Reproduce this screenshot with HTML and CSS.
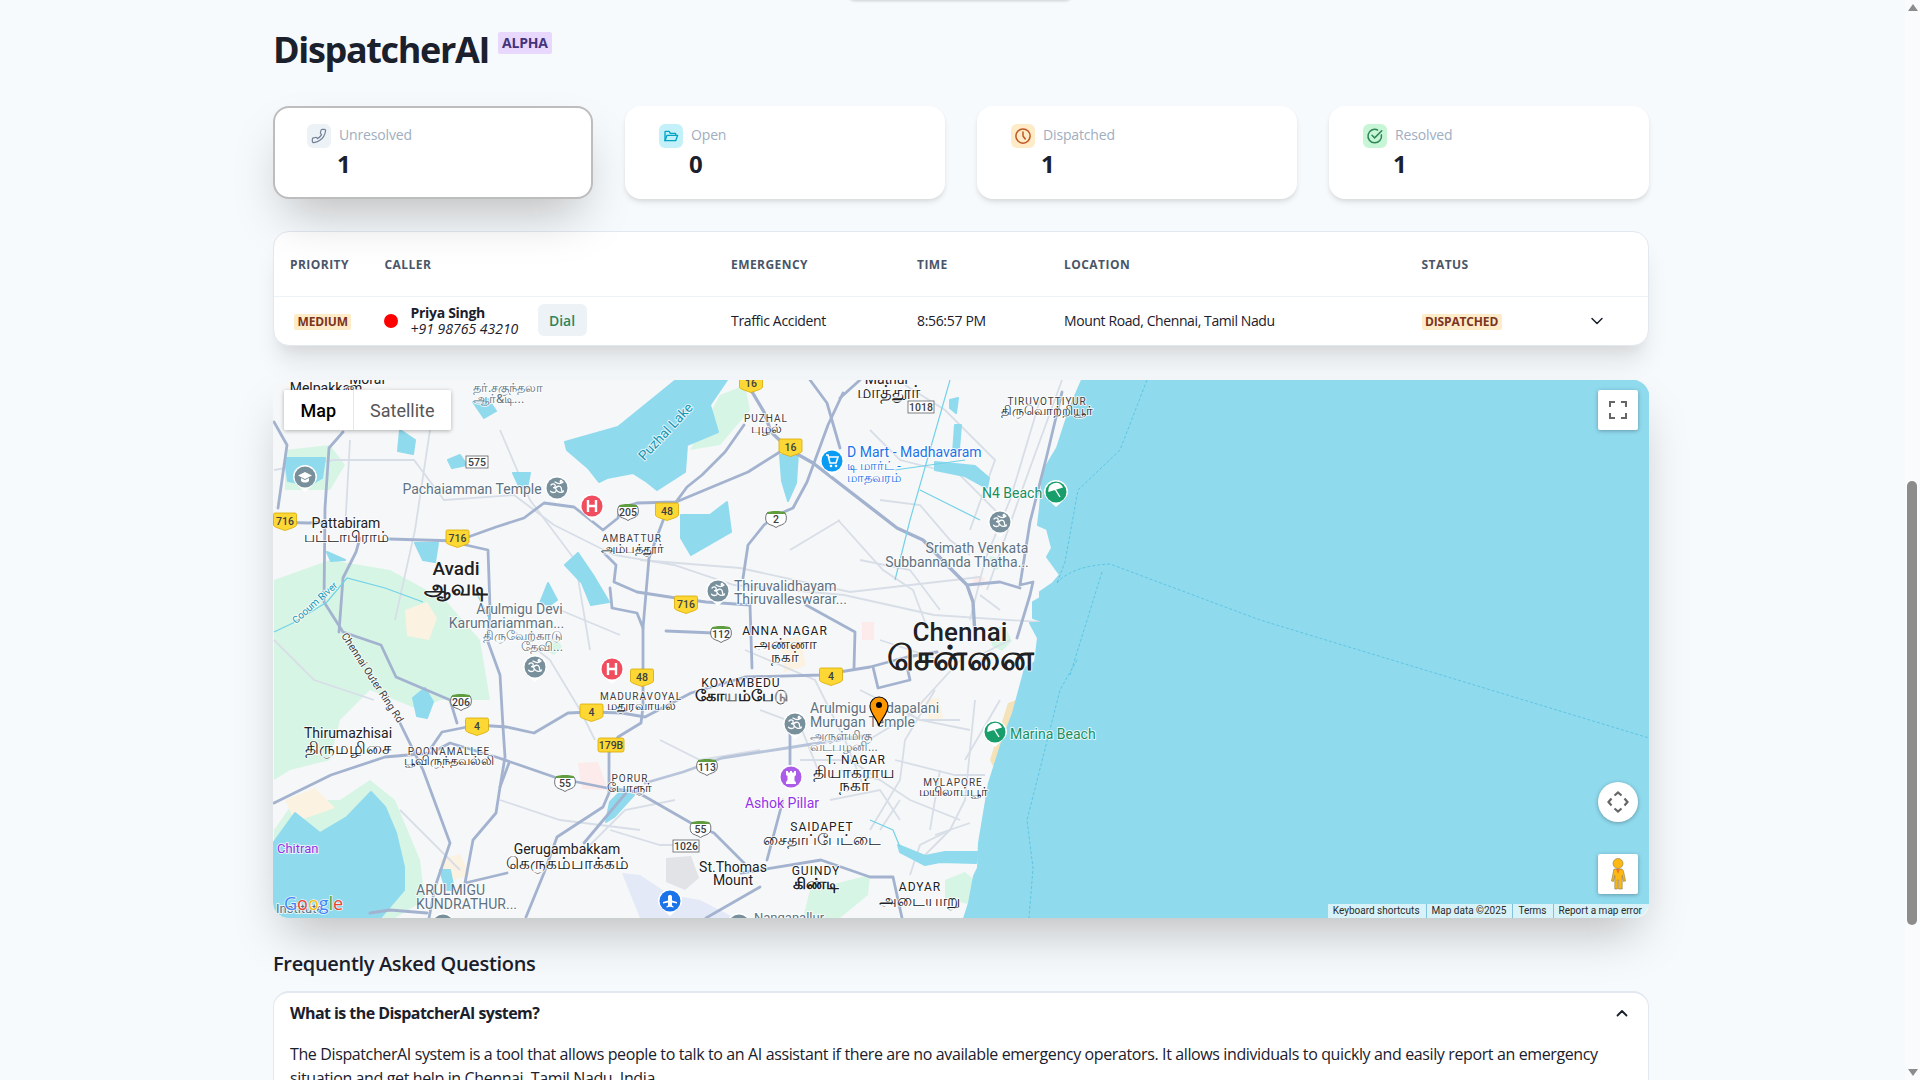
FILE: index.html
```html
<!DOCTYPE html>
<html lang="en">
<head>
<meta charset="utf-8">
<title>DispatcherAI</title>
<link rel="stylesheet" href="styles.css">
</head>
<body>
<div class="top-tab"></div>
<main class="page">
  <header class="title-row">
    <h1>DispatcherAI</h1>
    <span class="alpha">ALPHA</span>
  </header>

  <section class="stats">
    <div class="stat selected">
      <div class="stat-head">
        <span class="stat-icon i-gray"><svg viewBox="0 0 24 24" width="16" height="16" fill="none" stroke="currentColor" stroke-width="1.800" stroke-linecap="round" stroke-linejoin="round"><path transform="translate(24 0) scale(-1 1)" d="M22 16.920v3a2 2 0 0 1-2.180 2 19.790 19.790 0 0 1-8.630-3.070 19.500 19.500 0 0 1-6-6 19.790 19.790 0 0 1-3.070-8.670A2 2 0 0 1 4.110 2h3a2 2 0 0 1 2 1.720 12.840 12.840 0 0 0 .7 2.810 2 2 0 0 1-.45 2.110L8.090 9.910a16 16 0 0 0 6 6l1.270-1.270a2 2 0 0 1 2.110-.45 12.840 12.840 0 0 0 2.810.7A2 2 0 0 1 22 16.920z"/></svg></span>
        <span class="stat-label">Unresolved</span>
      </div>
      <div class="stat-value">1</div>
    </div>
    <div class="stat">
      <div class="stat-head">
        <span class="stat-icon i-cyan"><svg viewBox="0 0 24 24" width="16" height="16" fill="none" stroke="currentColor" stroke-width="2" stroke-linecap="round" stroke-linejoin="round"><path d="M3 19V6a1 1 0 0 1 1-1h5l2 3h7a1 1 0 0 1 1 1v2"/><path d="M3 19l3-8h16l-3 8H3z"/></svg></span>
        <span class="stat-label">Open</span>
      </div>
      <div class="stat-value">0</div>
    </div>
    <div class="stat">
      <div class="stat-head">
        <span class="stat-icon i-orange"><svg viewBox="0 0 24 24" width="18" height="18" fill="none" stroke="currentColor" stroke-width="2" stroke-linecap="round" stroke-linejoin="round"><circle cx="12" cy="12" r="9.500"/><path d="M12 6.500V12l3 4"/></svg></span>
        <span class="stat-label">Dispatched</span>
      </div>
      <div class="stat-value">1</div>
    </div>
    <div class="stat">
      <div class="stat-head">
        <span class="stat-icon i-green"><svg viewBox="0 0 24 24" width="18" height="18" fill="none" stroke="currentColor" stroke-width="2" stroke-linecap="round" stroke-linejoin="round"><path d="M20.500 10.500A9 9 0 1 1 15.500 4"/><path d="M8 11l3.500 3.500L21 5"/></svg></span>
        <span class="stat-label">Resolved</span>
      </div>
      <div class="stat-value">1</div>
    </div>
  </section>

  <section class="table-card">
    <table class="calls">
      <thead>
        <tr><th class="c-pri">Priority</th><th class="c-caller">Caller</th><th class="c-em">Emergency</th><th class="c-time">Time</th><th class="c-loc">Location</th><th class="c-status">Status</th><th class="c-more"></th></tr>
      </thead>
      <tbody>
        <tr>
          <td class="c-pri"><span class="badge badge-in">Medium</span></td>
          <td class="c-caller">
            <div class="caller">
              <span class="dot"></span>
              <div class="who"><div class="name">Priya Singh</div><div class="phone">+91 98765 43210</div></div>
              <button class="dial">Dial</button>
            </div>
          </td>
          <td class="c-em">Traffic Accident</td>
          <td class="c-time">8:56:57 PM</td>
          <td class="c-loc">Mount Road, Chennai, Tamil Nadu</td>
          <td class="c-status"><span class="badge">Dispatched</span></td>
          <td class="c-more"><svg class="chev" viewBox="0 0 14 14" width="14" height="14" fill="none" stroke="currentColor" stroke-width="1.500" stroke-linecap="round" stroke-linejoin="round"><path d="M2 4.500l5 5 5-5"/></svg></td>
        </tr>
      </tbody>
    </table>
  </section>

  <section class="map">
    <svg class="map-canvas" viewBox="273 380 1376 538" width="1376" height="538" font-family="Roboto, 'Noto Sans', sans-serif">
      <defs>
        <g id="pin"><path d="M-12 0a12 12 0 1 1 24 0c0 6-6 9-12 15C-6 9-12 6-12 0z" fill="#fff"/></g>
        <path id="ysh" d="M-10 -8h20a1.500 1.500 0 0 1 1.500 1.500V4c0 2-6 3.500-11.500 5.500C-5.500 7.500-11.500 6-11.500 4V-6.500A1.500 1.500 0 0 1-10-8z" fill="#fdd835" stroke="#d8a900" stroke-width=".8"/>
        <g id="wsh"><path d="M-9 -6c3-1 15-1 18 0 2 3 1.500 7 .5 9C8 6 3 6 0 8.500-3 6-8 6-9.500 3c-1-2-1.500-6 .5-9z" fill="#fff" stroke="#5f6368" stroke-width=".9"/><path d="M-9 -6.500c3-2 15-2 18 0v1.500h-18z" fill="#5f9d3f"/></g>
        <g id="om"><path d="M-6 -3c2-2 5-1 4 1.500-.5 1-1.500 1.200-2 1.200 2 0 4 1 3 3.500-1 2-4.500 1.500-5.500 0M-1.500 0c1.500-2 4.500-2.500 5.500-.5 1 2 0 4.500 2 4.500M-1 1.500c2 3 5.500 4 7.500 1.500M-2 -6c3 2 6 2 8 0M4 -7.500a.9.9 0 1 0 .1 0" fill="none" stroke="#fff" stroke-width="1.300" stroke-linecap="round"/></g>
      </defs>

      <rect x="273" y="380" width="1376" height="538" fill="#f6f7f8"/>

      <g fill="#d6f5e5">
        <path d="M274 580l56-20 60 10 55 30 35 40 10 60-50 0-20 10-50-20-30 30-10 40-40 10-16 10z"/>
        <path d="M274 830l21-30 45 0 30-20 25 20 25 60 5 40-30 18H274z"/>
        <path d="M285 450l45-5 15 20-15 25-45 0z"/>
        <path d="M720 395l25-10 5 25-30 35-30 5z"/>
        <path d="M803 918l7-28 40-10 20-5-2 20-28 23z"/>
        <path d="M990 630l14-5 8 16-10 10-10-5z"/>
        <path d="M945 880l20-8 16 14-14 18-22-6z"/>
        <path d="M546 640l10-3 6 10-8 8-10-6z"/>
        <path d="M990 556l14 4-6 10-12-4z"/>
        <path d="M1058 590l8-2-14 28-5 0z"/>
      </g>
      <g fill="#fbf2e2">
        <path d="M405 610l22-8 10 16-8 22-22-4z"/>
        <path d="M440 860l20-6 10 20-24 10z"/>
        <path d="M285 800l30-12 20 20-40 14z"/>
        <path d="M780 640l20-4 6 30-22 6z"/>
        <path d="M925 700l14-2 4 20-14 4z"/>
      </g>
      <g fill="#fdeaea"><path d="M578 763l20-1 10 28-26-1z"/><path d="M862 622l12 0 0 18-12 0z"/><path d="M975 575l10 3-3 9-10-3z"/></g>
      <path d="M622 873l18 2 30 20 30 5 35 18h-95z" fill="#e3e9f6"/>
      <path d="M666 858l25-2 8 22-14 12-19-8z" fill="#e1e3e6"/>
      <path d="M1017 700l-9 3-18 57 5 10 13-45zM986 795l-4 30 6-1 6-28zM982 858l-4 30 5-1 4-28z" fill="#f4e2b8"/>

      <g fill="none" stroke="#d8dee7" stroke-width="1.800">
        <path d="M274 470l60-10 80 0 30 40 70-5 40 30 60 30 60 10 60 20 110 10 90 20 150 10"/>
        <path d="M640 560l100 8 110 24 130-15"/>
        <path d="M350 440l-5 90M430 430l-15 100-20 90M500 430l30 70 45 60 15 90"/>
        <path d="M838 520l45 50 30 20 15 40M870 430l30 30 60 15 45 45M880 500l40 5 30 35 20 15"/>
        <path d="M1040 400l-30 100-25 60-15 60M1062 380l-40 110-35 100"/>
        <path d="M905 385l40 25 30 30 20 20-25 70"/>
        <path d="M745 650l70 30 30 60 20 50M860 690l60 30 50 10M800 760l50 0 60 40 50 20"/>
        <path d="M935 690l-30 50-5 40-30 50M975 700l-10 100-15 30-30 15-10 30M895 760l60 15 30 0"/>
        <path d="M870 735l-40 5M965 655l-55 60-50 30M880 830l20-30M935 835l35 -12M920 860l30-30"/>
        <path d="M274 640l40 40 60 20M400 810l60 60M500 800l60 20 80 10M585 850l40-40 50-10M500 620l50 40 30 50 15 30"/>
        <path d="M560 610l60 25M660 740l40 20 60-10M610 830l50 15 40 0M840 520l-50 30M860 560l50 10 30 40M880 640l60 20M760 710l40 15 20 50M840 770l40 10M940 770l-10 60M830 800l50 -10 20 30"/>
        <path d="M1000 610l-20 -15M1010 640l-30 15M1000 700l-35 60M960 720l-40 0 -25 -15"/>
      </g>

      <g fill="#90daee" stroke="#90daee" stroke-width="2" stroke-linejoin="round">
        <path d="M1082 380l-12 28-13 40-12 20-2 4-3 36-2 17 9 4 5 19-5 9 13 18-7 8-13 9v6l-7 4v16l14 5-17 0 8 15-3 24-10 6-2 8-10 37-10 26-14 44-10 60-1 25-4 8-5 27-10 31H1649V380z"/>
        <path d="M565 442l53-15 58-47h51l-17 25 8 27-31 13-2 27-28 18-10-8-14-9-26 5-8 4-11-14-21-18z"/>
        <path d="M448 460l12-5 7 10-15 3zM473 402l15-3 8 12-12 7zM513 473l17 0-3 15-8-2zM681 515h29l17-13 4 30-40 23-10-17zM578 553l15 22 16 27-18 3-9-22-17-18zM540 603l8-20 9 17-7 5zM415 543l23 0-3 19-12-2zM285 458l40 0-3 20-12 7-22-4zM327 552l18 8-14 1z"/>
        <path d="M780 455l18-2-2 30-8 18-6-20zM935 462l40 4 14 12-2 10-22-12-30-6zM950 400l8-2-2 15-6-5zM955 425l6 0-2 24-6 4z"/>
        <path d="M274 842l21-29 25 20 27-16 24-25 14 15 11 26 8 34v23l-23 27H274z"/>
        <path d="M610 802l10-10 14 3-20 22-8 5zM440 870l10 0 4 20-8 0zM400 430l15 10-2 14-15-3zM413 698l12-10 8 14-6 16-10-2z"/>
        <path d="M898 845l27 11 20-4 33 0-2 11-36-1-15 3-25-13z"/>
      </g>

      <g fill="none" stroke="#a3b3cf" stroke-width="2.800" stroke-linejoin="round" stroke-linecap="round">
        <path d="M274 522l34 1 17-1M389 539l68 2 39-14 28-9 20-15 30 4 29 23 15-12 2-10 17-5 39-1 11-15 15-12 23-23 19-27"/>
        <path d="M676 502l72-30 35-22"/>
        <path d="M748 385l16 27 7 20 19 18 23 13 84 65 26 12 24 25 20 20 6 17 2 33" stroke-width="3.400"/>
        <path d="M843 393l-15 32-21 57-14 26-16 7-13 10-16 20-5 33"/>
        <path d="M810 380l17 23 13 45M840 398l20-18"/>
        <path d="M457 543l31 7 2 58-2 34 12 33 3 52 2 30-5 30"/>
        <path d="M343 432l-14 16-4 60-1 94 19 30 38 13 15 32 54 23 7 23"/>
        <path d="M400 723l23 47 27 73-15 44-6 31"/>
        <path d="M274 422l13 23-9 63"/>
        <path d="M274 803l57-28 54-18 46-4 19-10 46 14 61 21 50 10 30 4 54 31 23 10 30 30"/>
        <path d="M431 748l11-16 35-7 30 2 27 6 34-20 23-1 31 1 23 4 46-24 54-16 76-2 49-8 37-10 30-5"/>
        <path d="M664 518l-15 40-6 70v79l-2 16-23 14-9 16v40l-6 14-46 30-13 36-18 44"/>
        <path d="M626 793l-42 50"/>
        <path d="M645 783l38-11 39-14 65-10 83-13" stroke="#b7c4da"/>
        <path d="M603 552l13 13-2 17 23 10 39 6 30 4 44 3"/>
        <path d="M610 588l2 20 25 5 6 15M666 631l48 2M750 605l2 63M806 605l49 27-1 36"/>
        <path d="M873 667l5 21 32-8-3-13"/>
        <path d="M790 717v50"/>
        <path d="M783 800l-16 60M741 873l80-13 49 17 23 0 9 41M760 887l-54 31"/>
        <path d="M465 883l42-10M465 883l8-43 23-27 4-26 9-24"/>
        <path d="M339 632l4-54 13-26 4-14"/>
        <path d="M370 913l20-3 37 3"/>
        <path d="M1062 392l-15 63-17 67-10 63 13-3-3 13-13 43"/>
        <path d="M967 585l33-3 20 6"/>
      </g>
      <g fill="none" stroke="#5cc6e3" stroke-width="1" stroke-dasharray="3 2">
        <path d="M1147 380l-27 70-42 40-13 72-8 21M1057 583c10-12 30-18 53-19l150 56 389 118M1102 572l-32 103M1077 660l-17 30-33 130 6 48-4 50"/>
      </g>
      <g fill="none" stroke="#73d2e8" stroke-width="1.200">
        <path d="M950 380l-40 140-15 60M274 632l19-9 34-21 20-24 38 10 38 14M490 620l-15-30M895 470l70-10M920 490l60 30M870 820l23 10 7 17"/>
      </g>

      <!-- shields -->
      <g font-size="10.500" fill="#3c4043" text-anchor="middle" font-weight="500">
        <use href="#ysh" x="285" y="521"/><text x="285" y="525">716</text>
        <use href="#ysh" x="457.500" y="538"/><text x="457.500" y="542">716</text>
        <use href="#ysh" x="686" y="604"/><text x="686" y="608">716</text>
        <use href="#ysh" x="667" y="511"/><text x="667" y="515">48</text>
        <use href="#ysh" x="790.500" y="447"/><text x="790.500" y="451">16</text>
        <use href="#ysh" x="751" y="383"/><text x="751" y="387">16</text>
        <use href="#ysh" x="642" y="677"/><text x="642" y="681">48</text>
        <use href="#ysh" x="831" y="676"/><text x="831" y="680">4</text>
        <use href="#ysh" x="591.500" y="712"/><text x="591.500" y="716">4</text>
        <use href="#ysh" x="477" y="726"/><text x="477" y="730">4</text>
        <rect x="598" y="738" width="26" height="14" rx="2" fill="#fdd835" stroke="#d8a900" stroke-width=".8"/><text x="611" y="749">179B</text>
        <use href="#wsh" x="628" y="512"/><text x="628" y="516">205</text>
        <use href="#wsh" x="776" y="519"/><text x="776" y="523">2</text>
        <use href="#wsh" x="721" y="634"/><text x="721" y="638">112</text>
        <use href="#wsh" x="461" y="702"/><text x="461" y="706">206</text>
        <use href="#wsh" x="565" y="783"/><text x="565" y="787">55</text>
        <use href="#wsh" x="707" y="767"/><text x="707" y="771">113</text>
        <use href="#wsh" x="700.500" y="829"/><text x="700.500" y="833">55</text>
        <rect x="466" y="456" width="22" height="12" fill="#fff" stroke="#5f6368" stroke-width=".8"/><text x="477" y="466">575</text>
        <rect x="908" y="401" width="26" height="12" fill="#fff" stroke="#5f6368" stroke-width=".8"/><text x="921" y="411">1018</text>
        <rect x="673" y="840" width="26" height="12" fill="#fff" stroke="#5f6368" stroke-width=".8"/><text x="686" y="850">1026</text>
      </g>

      <!-- labels -->
      <g class="halo" text-anchor="middle">
        <g fill="#202124" font-size="14">
          <text x="326" y="393">Melpakkam</text>
          <text x="346" y="528">Pattabiram</text>
          <text x="346" y="542" font-size="15">பட்டாபிராம்</text>
          <text x="348" y="738">Thirumazhisai</text>
          <text x="348" y="754" font-size="16.500">திருமழிசை</text>
          <text x="567" y="854">Gerugambakkam</text>
          <text x="567" y="869" font-size="16.500">கெருகம்பாக்கம்</text>
          <text x="733" y="872">St.Thomas</text>
          <text x="733" y="885">Mount</text>
          <text x="887" y="384">Mathur</text>
          <text x="888" y="398" font-size="18">மாத்தூர்</text>
          <text x="367" y="384">Morai</text>
          <text x="367" y="396" font-size="13">மோரை</text>
        </g>
        <g fill="#202124" font-weight="500">
          <text x="456" y="575" font-size="19">Avadi</text>
          <text x="456" y="595" font-size="21" font-weight="700">ஆவடி</text>
          <text x="960" y="641" font-size="26">Chennai</text>
          <text x="960" y="670" font-size="35" font-weight="700">சென்னை</text>
        </g>
        <g fill="#3c4043" font-size="10" letter-spacing="1">
          <text x="766" y="422">PUZHAL</text>
          <text x="1047" y="405">TIRUVOTTIYUR</text>
          <text x="632" y="542">AMBATTUR</text>
          <text x="449" y="755">POONAMALLEE</text>
          <text x="641" y="700">MADURAVOYAL</text>
          <text x="630" y="782">PORUR</text>
          <text x="953" y="786">MYLAPORE</text>
          <text x="785" y="635" font-size="12" fill="#202124">ANNA NAGAR</text>
          <text x="741" y="687" font-size="12" fill="#202124">KOYAMBEDU</text>
          <text x="816" y="875" font-size="12" fill="#202124">GUINDY</text>
          <text x="822" y="831" font-size="12" fill="#202124">SAIDAPET</text>
          <text x="856" y="764" font-size="12" fill="#202124">T. NAGAR</text>
          <text x="920" y="891" font-size="12" fill="#202124">ADYAR</text>
        </g>
        <g fill="#202124" font-size="12.500">
          <text x="766" y="433">புழல்</text>
          <text x="1047" y="415">திருவொற்றியூர்</text>
          <text x="632" y="553" font-size="13">அம்பத்தூர்</text>
          <text x="449" y="765">பூவிருந்தவல்லி</text>
          <text x="641" y="710">மதுரவாயல்</text>
          <text x="629" y="792" font-size="13">போரூர்</text>
          <text x="953" y="796" font-size="13">மயிலாப்பூர்</text>
          <text x="785" y="649" font-size="15">அண்ணா</text>
          <text x="785" y="662" font-size="15">நகர்</text>
          <text x="741" y="701" font-size="15.500" font-weight="700">கோயம்பேடு</text>
          <text x="816" y="889" font-size="15.500" font-weight="700">கிண்டி</text>
          <text x="822" y="845" font-size="15.500">சைதாப்பேட்டை</text>
          <text x="854" y="778" font-size="16.500">தியாகராய</text>
          <text x="854" y="791" font-size="16.500">நகர்</text>
          <text x="919" y="906" font-size="16">அடையாறு</text>
        </g>
        <g fill="#5f7282" font-size="14">
          <text x="472" y="494">Pachaiamman Temple</text>
          <text x="519.500" y="614">Arulmigu Devi</text>
          <text x="506.500" y="628">Karumariamman...</text>
          <text x="523" y="640" font-size="12.500">திருவேற்காடு</text>
          <text x="542" y="651" font-size="12.500">தேவி...</text>
          <text x="977" y="553">Srimath Venkata</text>
          <text x="957" y="567">Subbannanda Thatha...</text>
        </g>
        <g fill="#5f7282" text-anchor="start">
          <text x="734" y="591" font-size="14">Thiruvalidhayam</text>
          <text x="734" y="604" font-size="14">Thiruvalleswarar...</text>
          <text x="810" y="713" font-size="14">Arulmigu Vadapalani</text>
          <text x="810" y="727" font-size="14">Murugan Temple</text>
          <text x="810" y="740" font-size="12.500">அருள்மிகு</text>
          <text x="810" y="751" font-size="12.500">வடபழனி...</text>
          <text x="416" y="895" font-size="14">ARULMIGU</text>
          <text x="416" y="909" font-size="14">KUNDRATHUR...</text>
          <text x="276" y="913" font-size="13">Institute</text>
          <text x="754" y="922" font-size="13">Nanganallur</text>
          <text x="473" y="392" font-size="13">தர்.சகுந்தலா</text>
          <text x="473" y="403" font-size="13">ஆர்&amp;டி...</text>
        </g>
        <g fill="#1a73e8" text-anchor="start">
          <text x="847" y="457" font-size="14">D Mart - Madhavaram</text>
          <text x="847" y="470" font-size="12.500">டி மார்ட் -</text>
          <text x="847" y="482" font-size="12.500">மாதவரம்</text>
        </g>
        <g fill="#1a8f62" text-anchor="start" font-size="14">
          <text x="982" y="498">N4 Beach</text>
          <text x="1010" y="739">Marina Beach</text>
        </g>
        <g fill="#9334e6" font-size="14">
          <text x="782" y="808">Ashok Pillar</text>
          <text x="277" y="853" text-anchor="start" font-size="13">Chitran</text>
        </g>
        <text transform="translate(666 432) rotate(-47)" fill="#1796b5" font-size="13.500" dy="4">Puzhal Lake</text>
        <text transform="translate(315 603) rotate(-42)" fill="#1796b5" font-size="10" dy="3">Cooum River</text>
        <text transform="translate(372 678) rotate(57)" fill="#3c4043" font-size="10.500" dy="3">Chennai Outer Ring Rd</text>
      </g>

      <!-- pins -->
      <use href="#pin" x="305" y="477"/><circle cx="305" cy="477" r="10.500" fill="#78909c"/>
      <path d="M305 472l7 3.500-7 3.500-7-3.500zM301 478v3c2 2 6 2 8 0v-3l-4 2z" fill="#fff"/>
      <use href="#pin" x="557" y="488"/><circle cx="557" cy="488" r="10.500" fill="#78909c"/><use href="#om" x="557" y="488"/>
      <use href="#pin" x="718" y="591"/><circle cx="718" cy="591" r="10.500" fill="#78909c"/><use href="#om" x="718" y="591"/>
      <use href="#pin" x="535" y="667"/><circle cx="535" cy="667" r="10.500" fill="#78909c"/><use href="#om" x="535" y="667"/>
      <use href="#pin" x="1000" y="522"/><circle cx="1000" cy="522" r="10.500" fill="#78909c"/><use href="#om" x="1000" y="522"/>
      <use href="#pin" x="795" y="724"/><circle cx="795" cy="724" r="10.500" fill="#78909c"/><use href="#om" x="795" y="724"/>
      <use href="#pin" x="739" y="925"/><circle cx="739" cy="925" r="10.500" fill="#78909c"/>
      <use href="#pin" x="443" y="925"/><circle cx="443" cy="925" r="10.500" fill="#78909c"/>
      <use href="#pin" x="592" y="506"/><circle cx="592" cy="506" r="10.500" fill="#f04e5e"/>
      <path d="M588 500v12M596 500v12M588 506h8" stroke="#fff" stroke-width="2.400" fill="none"/>
      <use href="#pin" x="612" y="669"/><circle cx="612" cy="669" r="10.500" fill="#f04e5e"/>
      <path d="M608 663v12M616 663v12M608 669h8" stroke="#fff" stroke-width="2.400" fill="none"/>
      <use href="#pin" x="832" y="461"/><circle cx="832" cy="461" r="10.500" fill="#0a9cf5"/>
      <path d="M826 455h2l2 8h6l2-6h-9" fill="none" stroke="#fff" stroke-width="1.600"/><circle cx="831" cy="466" r="1.300" fill="#fff"/><circle cx="836" cy="466" r="1.300" fill="#fff"/>
      <use href="#pin" x="1056" y="492"/><circle cx="1056" cy="492" r="10.500" fill="#189e6b"/>
      <path d="M1049 491a7 7 0 0 1 13-4zM1055 489l5 8" fill="#fff" stroke="#fff" stroke-width="1.400"/>
      <use href="#pin" x="995" y="732"/><circle cx="995" cy="732" r="10.500" fill="#189e6b"/>
      <path d="M988 731a7 7 0 0 1 13-4zM994 729l5 8" fill="#fff" stroke="#fff" stroke-width="1.400"/>
      <use href="#pin" x="791" y="777"/><circle cx="791" cy="777" r="10.500" fill="#ab5ce8"/>
      <path d="M786 771h2v1.500h2V771h2v1.500h2V771h2v4l-1.500 1.500v4l1.500 2v1.500h-10V782l1.500-2v-4L786 775z" fill="#fff"/>
      <use href="#pin" x="670" y="901"/><circle cx="670" cy="901" r="10.500" fill="#1a73e8"/>
      <path d="M663 902l5-1.500v-4c0-1 1-1.500 2-1.500s2 .500 2 1.500v4l5 1.500v1.500l-5-1v3l1.500 1v1l-3.500-.8-3.500.8v-1l1.500-1v-3l-5 1z" fill="#fff"/>

      <!-- marker -->
      <path d="M879 726c-1-6-9-12-9-20a9 9 0 0 1 18 0c0 8-8 14-9 20z" fill="#ff9800" stroke="#000" stroke-width="1.100"/>
      <circle cx="879" cy="705" r="3" fill="#000"/>

      <text x="284" y="910" class="google" font-size="18" font-weight="500"><tspan fill="#4285f4">G</tspan><tspan fill="#ea4335">o</tspan><tspan fill="#fbbc05">o</tspan><tspan fill="#4285f4">g</tspan><tspan fill="#34a853">l</tspan><tspan fill="#ea4335">e</tspan></text>
    </svg>

    <div class="map-type">
      <button class="mt on">Map</button>
      <button class="mt">Satellite</button>
    </div>
    <button class="map-btn full"><svg viewBox="0 0 18 18" width="18" height="18" fill="none" stroke="#666" stroke-width="2"><path d="M1 6V1h5M12 1h5v5M17 12v5h-5M6 17H1v-5"/></svg></button>
    <button class="map-btn rotate"><svg viewBox="0 0 24 24" width="24" height="24" fill="none" stroke="#666" stroke-width="2.200"><path d="M8.500 5.500L12 2.500l3.500 3M8.500 18.500l3.500 3 3.500-3M5.500 8.500L2.500 12l3 3.500M18.500 8.500l3 3.500-3 3.500"/></svg></button>
    <button class="map-btn pegman"><svg viewBox="0 0 18 32" width="18" height="32"><circle cx="9" cy="5.500" r="5" fill="#fdb813" stroke="#8a7a50" stroke-width=".6"/><path d="M5 11h8l1.500 2 2 10-2 .5-1.300-6v13.500H9.600v-9H8.400v9H5.800V17.500l-1.300 6-2-.5 2-10z" fill="#fdb813" stroke="#8a7a50" stroke-width=".6"/><path d="M7 11h4l-2 5z" fill="#f0772b"/></svg></button>
    <div class="attrib">
      <span>Keyboard shortcuts</span><span>Map data ©2025</span><span>Terms</span><span>Report a map error</span>
    </div>
  </section>

  <section class="faq">
    <h2>Frequently Asked Questions</h2>
    <div class="faq-card">
      <div class="q"><span>What is the DispatcherAI system?</span><svg viewBox="0 0 14 14" width="14" height="14" fill="none" stroke="currentColor" stroke-width="1.800" stroke-linecap="round" stroke-linejoin="round"><path d="M2.500 9.500L7 5l4.500 4.500"/></svg></div>
      <p class="a">The DispatcherAI system is a tool that allows people to talk to an AI assistant if there are no available emergency operators. It allows individuals to quickly and easily report an emergency situation and get help in Chennai, Tamil Nadu, India.</p>
    </div>
  </section>
</main>
<aside class="scrollbar">
  <span class="arrow up"></span>
  <span class="thumb"></span>
  <span class="arrow down"></span>
</aside>
</body>
</html>
```
FILE: styles.css
```css
* { box-sizing: border-box; }
html, body { margin: 0; height: 100%; }
body {
  height: 1080px;
  overflow: hidden;
  position: relative;
  background: #F7FAFC;
  color: #1A202C;
  font-family: "Open Sans", "Noto Sans", sans-serif;
}
.top-tab {
  position: absolute;
  top: -10px;
  left: 849px;
  width: 222px;
  height: 10px;
  border-radius: 6px;
  box-shadow: 0 1px 3px rgba(0,0,0,.18);
}
.page { width: 1376px; margin-left: 273px; padding-top: 30px; }

.title-row { display: flex; align-items: flex-start; gap: 9px; height: 40px; margin-bottom: 36px; }
h1 { margin: 0; font-size: 36px; line-height: 40px; font-weight: 700; letter-spacing: -1.35px; }
.alpha {
  margin-top: 2px;
  height: 22px;
  padding: 0 4px;
  background: #E9D8FD;
  color: #44337A;
  border-radius: 2px;
  font-size: 14px;
  line-height: 22px;
  font-weight: 700;
  letter-spacing: -.2px;
}

.stats { display: grid; grid-template-columns: repeat(4, 1fr); gap: 32px; margin-bottom: 32px; }
.stat {
  height: 93px;
  padding: 18px 34px;
  background: #fff;
  border-radius: 16px;
  box-shadow: 0 4px 6px -1px rgba(0,0,0,.1), 0 2px 4px -1px rgba(0,0,0,.06);
}
.stat.selected {
  padding: 16px 32px;
  border: 2px solid #bdbdbd;
  box-shadow: 0 25px 50px -12px rgba(0,0,0,.25);
}
.stat-head { display: flex; align-items: center; gap: 8px; height: 24px; }
.stat-icon { width: 24px; height: 24px; border-radius: 6px; display: flex; align-items: center; justify-content: center; }
.i-gray { background: #EDF2F7; color: #718096; }
.i-cyan { background: #C4F1F9; color: #00A3C4; }
.i-orange { background: #FEEBC8; color: #C05621; }
.i-green { background: #C6F6D5; color: #2F855A; }
.stat-label { font-size: 14px; line-height: 20px; margin-top: -2px; font-weight: 500; color: #A0AEC0; letter-spacing: -.15px; }
.stat-value { margin: 0 0 0 30px; font-size: 24px; line-height: 32px; font-weight: 700; }

.table-card {
  height: 115px;
  margin-bottom: 34px;
  background: #fff;
  border: 1px solid #E2E8F0;
  border-radius: 16px;
  box-shadow: 0 20px 25px -5px rgba(0,0,0,.1), 0 10px 10px -5px rgba(0,0,0,.04);
}
.calls { width: 100%; border-collapse: collapse; table-layout: fixed; }
.calls th {
  height: 64px;
  padding: 2px 0 0;
  text-align: left;
  font-size: 12px;
  font-weight: 700;
  letter-spacing: .45px;
  text-transform: uppercase;
  color: #4A5568;
  border-bottom: 1px solid #EDF2F7;
}
.calls td { height: 49px; padding: 0; font-size: 14px; }
.c-pri { width: 110.500px; padding-left: 16px !important; }
.c-caller { width: 346.500px; }
.c-em { width: 186px; }
.c-time { width: 147px; }
.c-loc { width: 357.500px; }
.c-status { width: 160px; }
td.c-em, td.c-time { letter-spacing: -.33px; }
td.c-loc { letter-spacing: -.4px; }
.badge {
  display: inline-block;
  padding: 0 3.500px;
  height: 16px;
  line-height: 16px;
  background: #FEEBC8;
  color: #7B341E;
  border-radius: 2px;
  font-size: 12px;
  font-weight: 700;
  letter-spacing: -.15px;
  text-transform: uppercase;
  vertical-align: middle;
}
.badge-in { margin-left: 4px; }
.caller { display: flex; align-items: center; margin-left: -1px; }
.dot { width: 14px; height: 14px; border-radius: 50%; background: #f00; margin-right: 13px; flex: none; }
.who { width: 127px; }
.name { font-size: 14px; line-height: 16px; font-weight: 700; letter-spacing: -.3px; }
.phone { font-size: 14px; line-height: 16px; font-style: italic; }
.dial {
  width: 49px;
  height: 32px;
  margin-top: -1px;
  border: 0;
  padding: 0;
  border-radius: 6px;
  background: #EDF2F7;
  color: #2F855A;
  font: inherit;
  font-size: 14px;
  font-weight: 600;
}
.c-more { text-align: left; }
.chev { display: block; margin-left: 8px; color: #1A202C; }

.map {
  position: relative;
  width: 1376px;
  height: 538px;
  border-radius: 16px;
  box-shadow: 0 25px 50px -12px rgba(0,0,0,.25);
}
.map-canvas { display: block; border-radius: 16px; }
.halo { paint-order: stroke; stroke: #fff; stroke-width: 2px; stroke-opacity: .75; stroke-linejoin: round; }
.google { paint-order: stroke; stroke: #fff; stroke-width: 1.500px; stroke-opacity: .8; font-family: "Open Sans", sans-serif; }
.map-type {
  position: absolute;
  top: 10px;
  left: 11px;
  display: flex;
  height: 40px;
  border-radius: 2px;
  overflow: hidden;
  box-shadow: 0 1px 4px rgba(0,0,0,.3);
}
.mt {
  border: 0;
  background: #fff;
  padding: 0 16.500px;
  font-family: Roboto, sans-serif;
  font-size: 18px;
  color: #565656;
}
.mt.on { color: #000; font-weight: 500; border-right: 1px solid #e6e6e6; }
.map-btn {
  position: absolute;
  right: 11px;
  width: 40px;
  height: 40px;
  padding: 0;
  border: 0;
  background: #fff;
  border-radius: 2px;
  display: flex;
  align-items: center;
  justify-content: center;
  box-shadow: 0 1px 4px rgba(0,0,0,.3);
}
.full { top: 10px; }
.rotate { top: 402px; border-radius: 50%; }
.pegman { top: 474px; }
.attrib {
  position: absolute;
  right: 0;
  bottom: 0;
  height: 14px;
  display: flex;
  background: rgba(255,255,255,.65);
  border-bottom-right-radius: 16px;
  font-family: Roboto, sans-serif;
  font-size: 10px;
  line-height: 14px;
  color: #2b2b2b;
}
.attrib span { padding: 0 6px 0 5px; border-left: 1px solid rgba(120,190,215,.9); }
.attrib span:first-child { border-left: 0; }
.attrib span:last-child { padding-right: 7px; }

.faq { margin-top: 32px; }
h2 { margin: 0 0 13px; font-size: 20px; line-height: 28px; font-weight: 600; letter-spacing: -.33px; }
.faq-card {
  background: #fff;
  border: 1px solid #E2E8F0;
  border-top-width: 2px;
  border-radius: 16px 16px 0 0;
  padding: 0 16px;
  height: 200px;
}
.q { display: flex; justify-content: space-between; align-items: center; height: 40px; font-size: 16px; font-weight: 700; letter-spacing: -.55px; }
.q svg { margin-right: 3px; }
.a { margin: 9px 0 0; font-size: 16px; line-height: 24px; letter-spacing: -.38px; }

.scrollbar {
  position: absolute;
  top: 0;
  right: 0;
  width: 15px;
  height: 1080px;
  background: #f9fbfd;
}
.thumb { position: absolute; top: 481px; left: 2px; width: 10px; height: 444px; border-radius: 5px; background: #8c8c8c; }
.arrow { position: absolute; left: 3px; width: 0; height: 0; border-left: 5px solid transparent; border-right: 5px solid transparent; }
.arrow.up { top: 4px; border-bottom: 7px solid #8c8c8c; }
.arrow.down { bottom: 4px; border-top: 7px solid #8c8c8c; }
```
